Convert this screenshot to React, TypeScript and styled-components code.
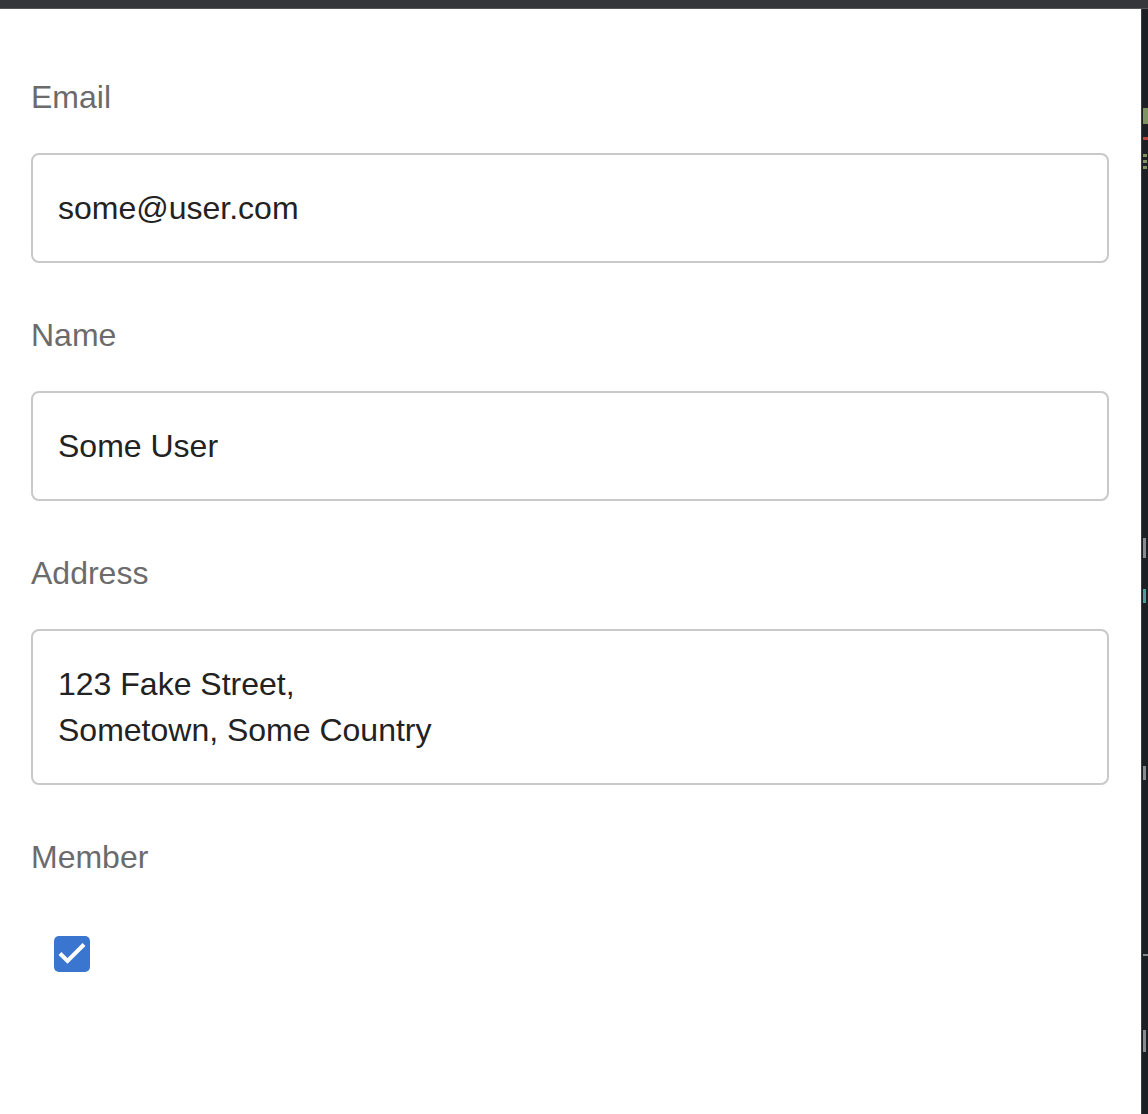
import React from 'react';
import styled, { createGlobalStyle } from 'styled-components';

const GlobalStyle = createGlobalStyle`
    html, body {
        margin: 0;
        padding: 0;
        background: #ffffff;
    }
    * {
        box-sizing: border-box;
    }
`;

const Shell = styled.div`
    display: flex;
    flex-direction: column;
    width: 1148px;
    height: 1114px;
    overflow: hidden;
    font-family: 'Liberation Sans', Arial, Helvetica, sans-serif;
`;

const TopBar = styled.div`
    height: 9px;
    flex: none;
    background: #35363a;
    border-bottom: 1px solid #55565a;
`;

const Body = styled.div`
    display: flex;
    flex: 1;
    min-height: 0;
`;

const Main = styled.main`
    flex: 1;
    background: #ffffff;
    padding: 68px 32px 0 31px;
`;

// a sliver of a code editor peeking in at the right edge
const EditorStrip = styled.div`
    position: relative;
    width: 7px;
    flex: none;
    background: #1e1f22;
    border-left: 1px solid #3b3c40;
    overflow: hidden;
`;

const Mark = styled.span<{ $top: number; $height: number; $width: number; $color: string }>`
    position: absolute;
    left: 1px;
    top: ${(p) => p.$top}px;
    width: ${(p) => p.$width}px;
    height: ${(p) => p.$height}px;
    background: ${(p) => p.$color};
`;

const Field = styled.div`
    display: flex;
    flex-direction: column;
    margin-bottom: 52px;
`;

const Label = styled.label`
    font-size: 32px;
    line-height: 40px;
    color: #6b6b6b;
    margin-bottom: 36px;
`;

const MemberLabel = styled(Label)`
    margin-bottom: 59px;
`;

const TextInput = styled.input`
    height: 110px;
    width: 100%;
    border: 2px solid #c9c9c9;
    border-radius: 8px;
    padding: 0 25px;
    font-family: inherit;
    font-size: 32px;
    color: #222222;
    background: #ffffff;
    outline: none;
`;

const TextArea = styled.textarea`
    height: 156px;
    width: 100%;
    border: 2px solid #c9c9c9;
    border-radius: 8px;
    padding: 30px 25px;
    font-family: inherit;
    font-size: 32px;
    line-height: 46px;
    color: #222222;
    background: #ffffff;
    resize: none;
    outline: none;
    overflow: hidden;
`;

const CheckWrap = styled.label`
    display: inline-flex;
    margin-left: 23px;
    cursor: pointer;
`;

const HiddenCheck = styled.input`
    display: none;
`;

const CheckBox = styled.span<{ $checked: boolean }>`
    display: flex;
    width: 36px;
    height: 36px;
    border-radius: 5px;
    background: ${(p) => (p.$checked ? '#3a76d0' : '#ffffff')};
    border: ${(p) => (p.$checked ? 'none' : '2px solid #999')};
`;

const marks = [
    { top: 99, height: 16, width: 5, color: '#7f9463' },
    { top: 128, height: 3, width: 5, color: '#c0453e' },
    { top: 145, height: 3, width: 4, color: '#7f9463' },
    { top: 151, height: 3, width: 4, color: '#7f9463' },
    { top: 157, height: 3, width: 4, color: '#7f9463' },
    { top: 529, height: 20, width: 3, color: '#8a8c90' },
    { top: 580, height: 14, width: 3, color: '#4f9c99' },
    { top: 757, height: 14, width: 3, color: '#8a8c90' },
    { top: 945, height: 2, width: 5, color: '#8a8c90' },
    { top: 1021, height: 22, width: 3, color: '#8a8c90' },
];

export default function App() {
    const [member, setMember] = React.useState(true);

    return (
        <>
            <GlobalStyle />
            <Shell>
                <TopBar />
                <Body>
                    <Main>
                        <Field>
                            <Label htmlFor="email">Email</Label>
                            <TextInput id="email" defaultValue="some@user.com" />
                        </Field>
                        <Field>
                            <Label htmlFor="name">Name</Label>
                            <TextInput id="name" defaultValue="Some User" />
                        </Field>
                        <Field>
                            <Label htmlFor="address">Address</Label>
                            <TextArea
                                id="address"
                                defaultValue={'123 Fake Street,\nSometown, Some Country'}
                            />
                        </Field>
                        <Field>
                            <MemberLabel as="div">Member</MemberLabel>
                            <CheckWrap>
                                <HiddenCheck
                                    type="checkbox"
                                    checked={member}
                                    onChange={(e) => setMember(e.target.checked)}
                                />
                                <CheckBox $checked={member}>
                                    {member && (
                                        <svg width="36" height="36" viewBox="0 0 36 36">
                                            <path
                                                d="M6 17.5 L13.5 25 L30 8.5"
                                                fill="none"
                                                stroke="#ffffff"
                                                strokeWidth="4"
                                            />
                                        </svg>
                                    )}
                                </CheckBox>
                            </CheckWrap>
                        </Field>
                    </Main>
                    <EditorStrip>
                        {marks.map((m) => (
                            <Mark
                                key={m.top}
                                $top={m.top}
                                $height={m.height}
                                $width={m.width}
                                $color={m.color}
                            />
                        ))}
                    </EditorStrip>
                </Body>
            </Shell>
        </>
    );
}
